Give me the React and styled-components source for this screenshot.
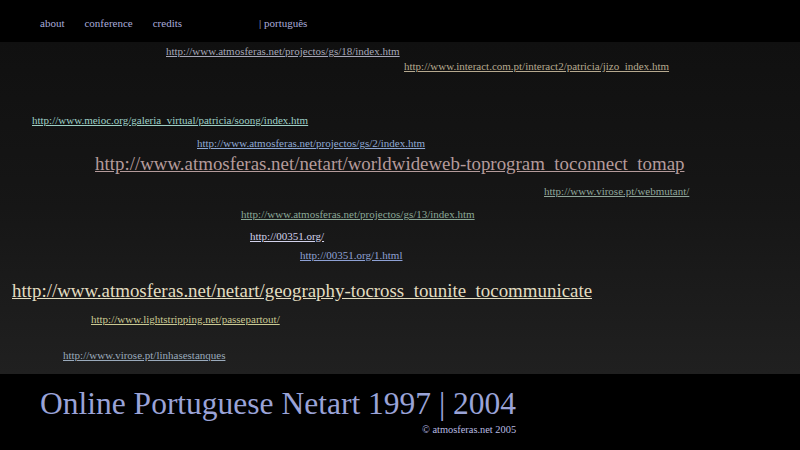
import React from 'react';
import styled, { createGlobalStyle } from 'styled-components';

const GlobalStyle = createGlobalStyle`
  html, body {
    margin: 0;
    padding: 0;
    background: #000;
  }
  body {
    font-family: "Liberation Serif", "Times New Roman", serif;
    width: 800px;
    height: 450px;
    overflow: hidden;
  }
`;

const Page = styled.div`
  display: flex;
  flex-direction: column;
  width: 800px;
  height: 450px;
`;

const Header = styled.nav`
  display: flex;
  align-items: center;
  height: 42px;
  box-sizing: border-box;
  padding: 4px 0 0 40px;
  gap: 20px;
  background: #000;
  font-size: 11px;
`;

const NavLink = styled.a`
  color: #a9acdb;
  text-decoration: none;
  margin-left: ${p => p.$offset || 0}px;
  cursor: pointer;
`;

const Canvas = styled.main`
  position: relative;
  height: 332px;
  background: linear-gradient(to bottom, #101010 0%, #161616 50%, #202020 100%);
`;

// scattered links: their position on the canvas is the piece itself
const FloatLink = styled.a`
  position: absolute;
  left: ${p => p.$x}px;
  top: ${p => p.$y}px;
  font-size: ${p => p.$size || 11}px;
  line-height: 1;
  color: ${p => p.$color};
  text-decoration: underline;
  white-space: nowrap;
  cursor: pointer;
`;

const Footer = styled.footer`
  flex: 1;
  background: #000;
  padding: 13px 0 0 40px;
`;

const FooterBlock = styled.div`
  display: inline-flex;
  flex-direction: column;
  align-items: flex-end;
`;

const Title = styled.h1`
  margin: 0;
  font-weight: normal;
  font-size: 31.5px;
  line-height: 34px;
  color: #9aa3d8;
`;

const Copy = styled.div`
  margin-top: 3px;
  font-size: 10.4px;
  color: #b8bce0;
`;

const links = [
  { url: 'http://www.atmosferas.net/projectos/gs/18/index.htm', x: 166, y: 4, color: '#a6a7b8' },
  { url: 'http://www.interact.com.pt/interact2/patricia/jizo_index.htm', x: 404, y: 19, color: '#b6a98f' },
  { url: 'http://www.meioc.org/galeria_virtual/patricia/soong/index.htm', x: 32, y: 73, color: '#9ed0c6' },
  { url: 'http://www.atmosferas.net/projectos/gs/2/index.htm', x: 197, y: 96, color: '#8fa9d4' },
  { url: 'http://www.atmosferas.net/netart/worldwideweb-toprogram_toconnect_tomap', x: 95, y: 113, color: '#b59b9b', size: 18.9 },
  { url: 'http://www.virose.pt/webmutant/', x: 544, y: 144, color: '#90a69b' },
  { url: 'http://www.atmosferas.net/projectos/gs/13/index.htm', x: 241, y: 167, color: '#8aa897' },
  { url: 'http://00351.org/', x: 250, y: 189, color: '#d2d2ec' },
  { url: 'http://00351.org/1.html', x: 300, y: 208, color: '#8ea1d4' },
  { url: 'http://www.atmosferas.net/netart/geography-tocross_tounite_tocommunicate', x: 12, y: 240, color: '#e2ddc0', size: 18.9 },
  { url: 'http://www.lightstripping.net/passepartout/', x: 91, y: 272, color: '#cac992' },
  { url: 'http://www.virose.pt/linhasestanques', x: 63, y: 308, color: '#9aaabb' },
];

export default function App() {
  return (
    <>
      <GlobalStyle />
      <Page>
        <Header>
          <NavLink>about</NavLink>
          <NavLink>conference</NavLink>
          <NavLink>credits</NavLink>
          <NavLink $offset={57}>| português</NavLink>
        </Header>
        <Canvas>
          {links.map(l => (
            <FloatLink key={l.url} $x={l.x} $y={l.y} $size={l.size} $color={l.color}>
              {l.url}
            </FloatLink>
          ))}
        </Canvas>
        <Footer>
          <FooterBlock>
            <Title>Online Portuguese Netart 1997 | 2004</Title>
            <Copy>© atmosferas.net 2005</Copy>
          </FooterBlock>
        </Footer>
      </Page>
    </>
  );
}
